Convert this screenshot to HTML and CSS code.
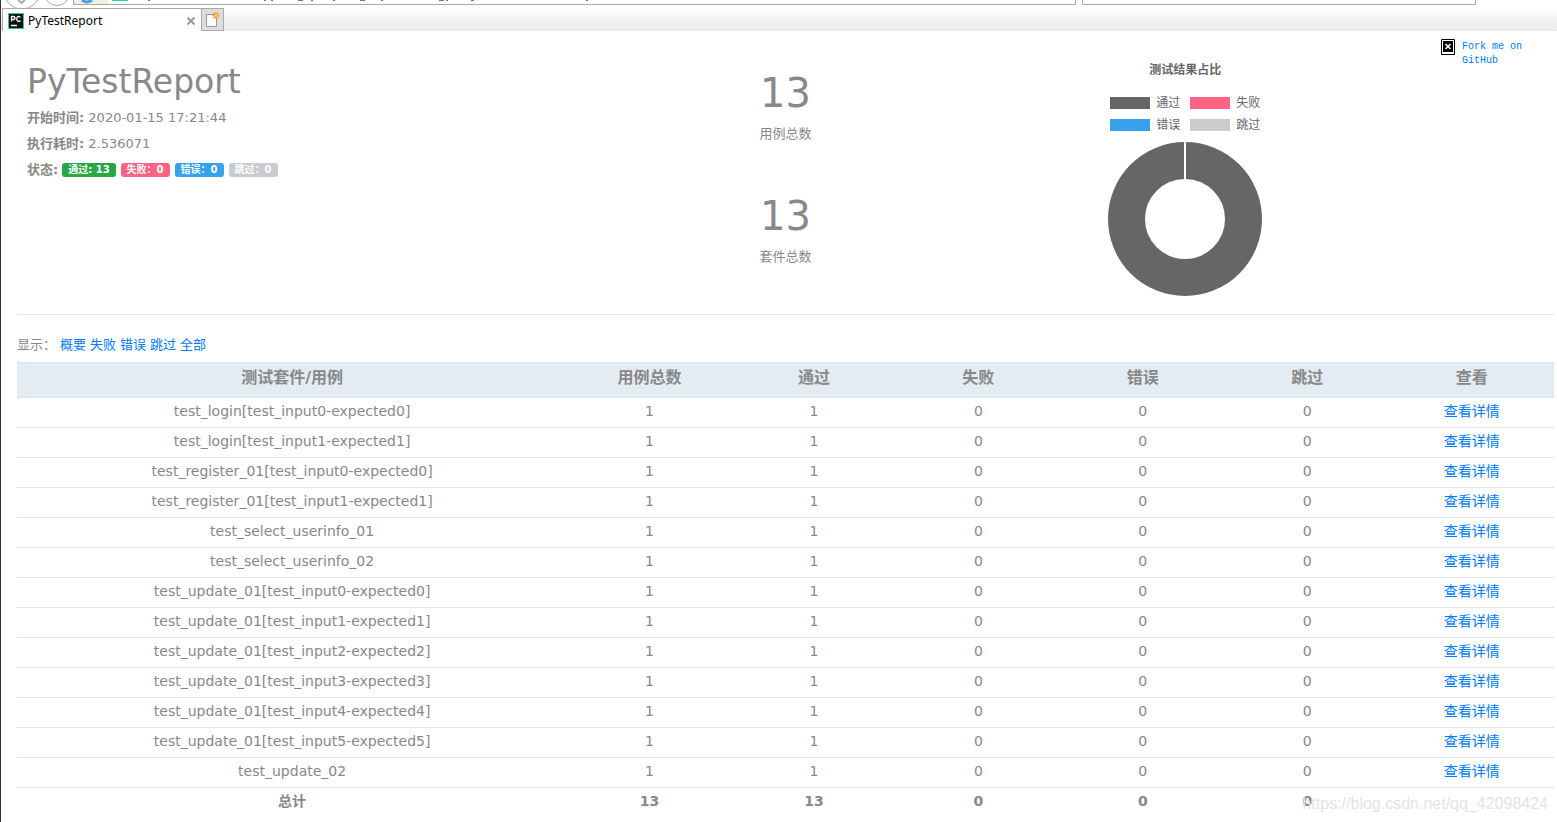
FILE: index.html
```html
<!DOCTYPE html>
<html lang="zh-CN">
<head>
<meta charset="utf-8">
<title>PyTestReport</title>
<link rel="stylesheet" href="styles.css">
</head>
<body>
<header class="browser">
  <div class="toolbar">
    <svg class="nav-icons" width="72" height="8" viewBox="0 0 72 8" fill="none" stroke="#aaa" aria-hidden="true">
      <circle cx="21" cy="-9" r="18" fill="#fff"/><path d="M17 0l3.500 3 3.500-3" stroke-width="2"/>
      <circle cx="56" cy="-7" r="12.500" fill="#fff"/>
    </svg>
    <div class="address">
      <span class="secure"><svg width="16" height="4" viewBox="0 0 16 4" aria-hidden="true"><path d="M3 0q5 4 10 0" fill="none" stroke="#5a9be6" stroke-width="3"/></svg></span>
      <span class="site-mark"></span>
      <svg class="url-tail" width="466" height="4" viewBox="0 0 466 4" stroke="#777" aria-hidden="true"><path d="M20 .5h2M136 .5h2M143 .5h2M170 .5h5M183 .5h2M205 .5h2M232 .5h5M253 .5h2M311 .5h5M318 .5h2M343 .5h3M458 .5h2"/></svg>
    </div>
    <div class="search"></div>
  </div>
  <div class="tabs">
    <div class="tab">
      <svg width="16" height="16" viewBox="0 0 16 16" aria-hidden="true"><path fill="#21d789" d="M0 0h16v16H0z"/><path fill="#111" d="M1 1h14v14H1z"/><path d="M3.500 8.500V3.500h2q1.500 0 1.500 1.500t-1.500 1.500h-2M12.500 4.200q-3.500-2-3.800 1.800.3 3.500 3.800 1.800M3 12.500h6" fill="none" stroke="#fff" stroke-width="1.300"/></svg>
      <span class="tab-name">PyTestReport</span>
      <button class="close" aria-label="关闭"><svg width="10" height="10" viewBox="0 0 10 10"><path d="M1.500 1.500l7 7M8.500 1.500l-7 7" stroke="#999" stroke-width="2"/></svg></button>
    </div>
    <button class="new-tab" aria-label="新标签页"><svg width="16" height="18" viewBox="0 0 16 18"><path d="M1.500 3.500h10v12h-10z" fill="#fafafa" stroke="#999"/><path d="M11 1v7M7.500 4.500h7M8.500 2l5 5M13.500 2l-5 5" stroke="#f0a020" stroke-width="1.400"/><circle cx="11" cy="4.500" r="1.500" fill="#ffd77a"/></svg></button>
  </div>
</header>

<a class="fork" href="#"><svg width="14" height="16" viewBox="0 0 14 16" aria-hidden="true"><path d="M.5.5h13v15H.5z" fill="#fff" stroke="#000"/><path d="M2 2h10v11H2z" fill="#000"/><path d="M4.500 5l5 5M9.500 5l-5 5" stroke="#fff" stroke-width="1.500"/></svg><span>Fork me on GitHub</span></a>

<main class="report">
  <section class="summary">
    <div class="info">
      <h1>PyTestReport</h1>
      <p><strong>开始时间:</strong> 2020-01-15 17:21:44</p>
      <p><strong>执行耗时:</strong> 2.536071</p>
      <p class="status"><strong>状态:</strong>
        <span class="badge pass">通过: 13</span>
        <span class="badge fail">失败：0</span>
        <span class="badge error">错误：0</span>
        <span class="badge skip">跳过：0</span></p>
    </div>
    <div class="totals">
      <div class="total"><div class="number">13</div><div>用例总数</div></div>
      <div class="total"><div class="number">13</div><div>套件总数</div></div>
    </div>
    <div class="chart">
      <h2>测试结果占比</h2>
      <ul class="legend">
        <li><i class="swatch dark"></i>通过</li><li><i class="swatch fail"></i>失败</li>
        <li><i class="swatch error"></i>错误</li><li><i class="swatch skip"></i>跳过</li>
      </ul>
      <svg width="154" height="154" viewBox="0 0 154 154" role="img" aria-label="通过 13"><circle cx="77" cy="77" r="58.500" fill="none" stroke="#666" stroke-width="37"/><path d="M77 0v40" stroke="#fff" stroke-width="2"/></svg>
    </div>
  </section>

  <nav class="filter"><span>显示：</span> <a href="#">概要</a> <a href="#">失败</a> <a href="#">错误</a> <a href="#">跳过</a> <a href="#">全部</a></nav>

  <table class="results">
    <colgroup><col class="name-col"><col span="6"></colgroup>
    <thead><tr><th>测试套件/用例</th><th>用例总数</th><th>通过</th><th>失败</th><th>错误</th><th>跳过</th><th>查看</th></tr></thead>
    <tbody>
      <tr><td>test_login[test_input0-expected0]</td><td>1</td><td>1</td><td>0</td><td>0</td><td>0</td><td><a href="#">查看详情</a></td></tr>
      <tr><td>test_login[test_input1-expected1]</td><td>1</td><td>1</td><td>0</td><td>0</td><td>0</td><td><a href="#">查看详情</a></td></tr>
      <tr><td>test_register_01[test_input0-expected0]</td><td>1</td><td>1</td><td>0</td><td>0</td><td>0</td><td><a href="#">查看详情</a></td></tr>
      <tr><td>test_register_01[test_input1-expected1]</td><td>1</td><td>1</td><td>0</td><td>0</td><td>0</td><td><a href="#">查看详情</a></td></tr>
      <tr><td>test_select_userinfo_01</td><td>1</td><td>1</td><td>0</td><td>0</td><td>0</td><td><a href="#">查看详情</a></td></tr>
      <tr><td>test_select_userinfo_02</td><td>1</td><td>1</td><td>0</td><td>0</td><td>0</td><td><a href="#">查看详情</a></td></tr>
      <tr><td>test_update_01[test_input0-expected0]</td><td>1</td><td>1</td><td>0</td><td>0</td><td>0</td><td><a href="#">查看详情</a></td></tr>
      <tr><td>test_update_01[test_input1-expected1]</td><td>1</td><td>1</td><td>0</td><td>0</td><td>0</td><td><a href="#">查看详情</a></td></tr>
      <tr><td>test_update_01[test_input2-expected2]</td><td>1</td><td>1</td><td>0</td><td>0</td><td>0</td><td><a href="#">查看详情</a></td></tr>
      <tr><td>test_update_01[test_input3-expected3]</td><td>1</td><td>1</td><td>0</td><td>0</td><td>0</td><td><a href="#">查看详情</a></td></tr>
      <tr><td>test_update_01[test_input4-expected4]</td><td>1</td><td>1</td><td>0</td><td>0</td><td>0</td><td><a href="#">查看详情</a></td></tr>
      <tr><td>test_update_01[test_input5-expected5]</td><td>1</td><td>1</td><td>0</td><td>0</td><td>0</td><td><a href="#">查看详情</a></td></tr>
      <tr><td>test_update_02</td><td>1</td><td>1</td><td>0</td><td>0</td><td>0</td><td><a href="#">查看详情</a></td></tr>
    </tbody>
    <tfoot><tr><td>总计</td><td>13</td><td>13</td><td>0</td><td>0</td><td>0</td><td></td></tr></tfoot>
  </table>
</main>
<div class="watermark">https://blog.csdn.net/qq_42098424</div>
</body>
</html>
```
FILE: styles.css
```css
* { box-sizing: border-box; }
body {
  margin: 0;
  min-height: 100vh;
  border-left: 1px solid #333;
  background: #fff;
  color: #888;
  font: 13px/20px "DejaVu Sans", "Noto Sans CJK SC", sans-serif;
  position: relative;
  overflow-x: hidden;
}
a { color: #007bff; text-decoration: none; }
button { border: 0; padding: 0; background: none; }

.browser { height: 31px; background: linear-gradient(#fff 10px, #f1f1f1 21px, #ececec 31px); }
.toolbar { display: flex; height: 8px; background: #fff; }
.nav-icons { flex: none; overflow: hidden; }
.address { display: flex; width: 1003px; height: 5px; border: 1px solid #aaa; border-top: 0; background: #fff; }
.secure { width: 34px; padding-left: 5px; line-height: 0; background: #e6f5dc; }
.site-mark { width: 16px; height: 1px; margin-left: 4px; background: #21d789; }
.search { width: 394px; height: 5px; margin-left: 6px; border: 1px solid #aaa; border-top: 0; }
.tabs { display: flex; height: 23px; padding-left: 1px; }
.tab { display: flex; align-items: center; width: 199px; padding: 1px 5px 0; border: 1px solid #aaa; border-bottom: 0; border-right: 0; background: #fff; }
.tab-name { flex: 1; padding-left: 4px; color: #000; font: 12px/16px "Noto Sans", sans-serif; }
.close { display: flex; }
.new-tab { display: flex; align-items: center; justify-content: center; width: 23px; border: 1px solid #aaa; background: #ddd; }

.fork { position: absolute; top: 39px; right: 31px; display: flex; gap: 7px; width: 85px; font: 10px/14px "Liberation Mono", monospace; }
.fork svg { flex: none; }
.fork span { padding-top: 1px; }

.report { padding: 31px 3px 0 16px; }
.summary { display: grid; grid-template-columns: 5fr 2fr 5fr; min-height: 253px; border-bottom: 1px solid #e5e5e5; }
.info { padding-left: 10px; }
h1 { margin: 0 0 6px; font-size: 33px; line-height: 40px; font-weight: 400; }
.info p { margin: 0 0 6px; }
.status { display: flex; align-items: center; gap: 5px; }
.status strong { margin-right: -1px; }
.badge { padding: 0 6px; border-radius: 3px; color: #fff; font-size: 10px; line-height: 14px; font-weight: 700; }
.pass { background: #28a745; }
.fail { background: #ff6384; }
.error { background: #36a2eb; }
.skip { background: #c9cbcf; }
.dark { background: #666; }
.totals { text-align: center; }
.total { padding-top: 6px; margin-bottom: 41px; }
.number { font-size: 40px; line-height: 50px; margin-bottom: 6px; }
.chart { display: flex; flex-direction: column; align-items: center; padding-right: 97px; color: #666; font-size: 12px; }
h2 { margin: -2px 0 12px; font-size: 12px; line-height: 20px; }
.legend { display: grid; grid-template-columns: auto auto; gap: 0 10px; margin: 0 0 6px; padding: 0; list-style: none; line-height: 22px; }
.legend li { display: flex; align-items: center; gap: 6px; }
.swatch { width: 40px; height: 12px; }

.filter { display: flex; gap: 4px; margin: 20px 0 7px; }
.results { width: 100%; table-layout: fixed; border-collapse: collapse; text-align: center; font-size: 14px; }
.name-col { width: 35.8%; }
.results th { height: 35px; padding: 0 0 4px; border-top: 1px solid #dee2e6; background: #e3ebf3; font-size: 16px; line-height: 24px; }
.results td { height: 30px; padding: 0 0 4px; border-top: 1px solid #dee2e6; line-height: 20px; }
.results tfoot { font-weight: 700; }
.watermark { position: absolute; right: 9px; bottom: 9px; color: #e4e4e4; font: 16px/18px "Liberation Sans", sans-serif; }
```
